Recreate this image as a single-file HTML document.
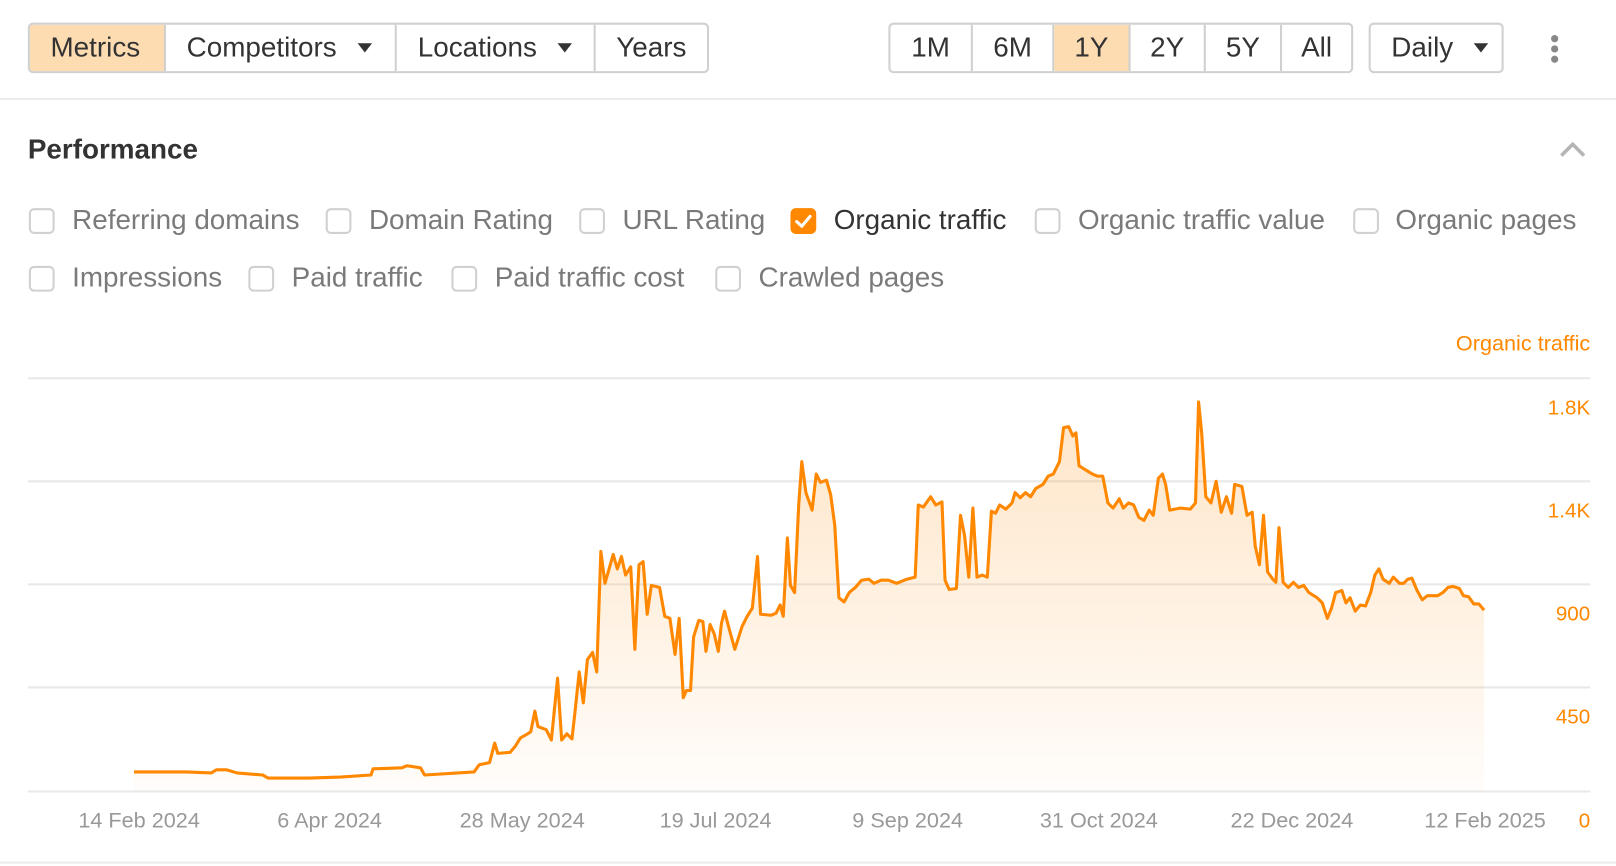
<!DOCTYPE html>
<html><head><meta charset="utf-8"><style>
*{box-sizing:border-box;margin:0;padding:0}
html,body{width:1616px;height:866px;overflow:hidden;background:#fff}
#w{position:absolute;left:0;top:0;width:1568px;height:840px;transform:scale(1.0306);transform-origin:0 0;font-family:"Liberation Sans",Arial,sans-serif;color:#333}
.a{position:absolute;white-space:nowrap}
.grp{position:absolute;top:22px;height:49px;display:flex;border:2px solid #d0d0d0;border-radius:5px;overflow:hidden}
.grp div{display:flex;align-items:center;padding:0 20px;font-size:27px;color:#333;border-right:2px solid #d0d0d0;height:100%;white-space:nowrap}
.grp div:last-child{border-right:none}
.on{background:#fddcb1}
.tri{display:inline-block;width:0;height:0;border-left:7px solid transparent;border-right:7px solid transparent;border-top:9px solid #333;margin-left:20px}
.cb{position:absolute;width:25px;height:25px;border:2px solid #d0d0d0;border-radius:5px}
.lb{position:absolute;font-size:27px;color:#7a7a7a;white-space:nowrap}
.yl{position:absolute;right:25px;font-size:20px;color:#ff8800;text-align:right}
.xl{position:absolute;top:785px;font-size:21px;color:#999;white-space:nowrap}
</style></head><body><div id="w">
<div class="grp" style="left:27px;width:661px">
<div class="on" style="width:133px">Metrics</div>
<div style="width:226px">Competitors<span class="tri"></span></div>
<div style="width:194px">Locations<span class="tri"></span></div>
<div style="flex:1">Years</div>
</div>
<div class="grp" style="left:862px;width:451px">
<div style="width:80px;justify-content:center;padding:0">1M</div>
<div style="width:79px;justify-content:center;padding:0">6M</div>
<div class="on" style="width:74px;justify-content:center;padding:0">1Y</div>
<div style="width:73px;justify-content:center;padding:0">2Y</div>
<div style="width:74px;justify-content:center;padding:0">5Y</div>
<div style="flex:1;justify-content:center;padding:0">All</div>
</div>
<div class="grp" style="left:1328px;width:131px"><div style="padding:0 0 0 20px">Daily<span class="tri"></span></div></div>
<div class="a" style="left:1505px;top:34px;width:7px;height:7px;border-radius:50%;background:#888"></div>
<div class="a" style="left:1505px;top:44px;width:7px;height:7px;border-radius:50%;background:#888"></div>
<div class="a" style="left:1505px;top:54px;width:7px;height:7px;border-radius:50%;background:#888"></div>
<div class="a" style="left:0;top:95px;width:1568px;height:2px;background:#ebebeb"></div>
<div class="a" style="left:27px;top:130px;font-size:27px;font-weight:bold;color:#333">Performance</div>
<svg class="a" style="left:1513px;top:137px" width="26" height="16"><path d="M2 14 L13 3 L24 14" stroke="#b5b5b5" stroke-width="3.5" fill="none"/></svg>

<div class="cb" style="left:28px;top:202px"></div><div class="lb" style="left:70px;top:198px">Referring domains</div>
<div class="cb" style="left:316px;top:202px"></div><div class="lb" style="left:358px;top:198px">Domain Rating</div>
<div class="cb" style="left:562px;top:202px"></div><div class="lb" style="left:604px;top:198px">URL Rating</div>
<div class="cb" style="left:767px;top:202px;background:#ff8800;border-color:#ff8800"><svg width="21" height="21" style="position:absolute;left:0;top:0"><path d="M4 11 L9 15.5 L17 6" stroke="#fff" stroke-width="3" fill="none" stroke-linecap="round" stroke-linejoin="round"/></svg></div><div class="lb" style="left:809px;top:198px;color:#333">Organic traffic</div>
<div class="cb" style="left:1004px;top:202px"></div><div class="lb" style="left:1046px;top:198px">Organic traffic value</div>
<div class="cb" style="left:1313px;top:202px"></div><div class="lb" style="left:1354px;top:198px">Organic pages</div>
<div class="cb" style="left:28px;top:258px"></div><div class="lb" style="left:70px;top:254px">Impressions</div>
<div class="cb" style="left:241px;top:258px"></div><div class="lb" style="left:283px;top:254px">Paid traffic</div>
<div class="cb" style="left:438px;top:258px"></div><div class="lb" style="left:480px;top:254px">Paid traffic cost</div>
<div class="cb" style="left:694px;top:258px"></div><div class="lb" style="left:736px;top:254px">Crawled pages</div>

<div class="a" style="right:25px;top:322px;font-size:21px;color:#ff8800">Organic traffic</div>
<div class="yl" style="top:385px">1.8K</div>
<div class="yl" style="top:485px">1.4K</div>
<div class="yl" style="top:585px">900</div>
<div class="yl" style="top:685px">450</div>
<div class="yl" style="top:786px">0</div>

<svg class="a" style="left:0;top:0" width="1568" height="840">
<defs><linearGradient id="g" gradientUnits="userSpaceOnUse" x1="0" y1="390" x2="0" y2="767"><stop offset="0" stop-color="#ff8800" stop-opacity="0.22"/><stop offset="1" stop-color="#ff8800" stop-opacity="0.02"/></linearGradient></defs>
<g stroke="#e8e8e8" stroke-width="2"><line x1="27" y1="367" x2="1543" y2="367"/><line x1="27" y1="467" x2="1543" y2="467"/><line x1="27" y1="567" x2="1543" y2="567"/><line x1="27" y1="667" x2="1543" y2="667"/></g>
<path d="M130,749 L180,749 205,750 210,747 220,747 230,750 255,752 260,755 300,755 330,754 360,752 362,746 390,745 395,743 408,745 412,752 460,749 465,742 475,740 480,721 483,731 495,730 500,724 505,716 512,712 515,710 519,690 522,705 530,708 535,718 541,658 545,718 550,712 555,717 558,690 562,652 566,682 570,640 575,633 579,652 583,535 587,566 595,538 599,552 603,540 607,558 612,550 616,630 620,548 624,545 628,596 632,568 640,570 645,598 650,600 655,635 659,600 663,677 666,670 670,670 673,618 678,602 682,603 685,632 689,606 693,615 697,632 700,605 703,593 708,612 713,630 720,608 725,598 730,590 735,540 738,596 748,597 753,595 757,587 760,598 764,522 767,568 771,575 775,490 778,448 782,478 788,495 792,460 796,468 802,466 806,480 810,510 814,580 819,584 824,575 830,570 836,563 843,562 848,566 855,563 862,563 870,566 880,562 888,560 891,490 896,492 903,482 908,490 914,487 917,563 921,572 928,571 932,500 936,520 940,560 944,493 948,560 953,558 958,560 962,496 966,498 970,490 976,494 982,488 985,478 990,483 995,478 1000,482 1005,474 1012,470 1017,462 1022,460 1028,448 1032,415 1037,414 1041,423 1044,420 1047,452 1055,457 1060,460 1065,462 1070,462 1075,488 1080,493 1086,484 1090,493 1095,488 1100,490 1105,502 1110,505 1115,495 1119,500 1124,464 1128,460 1131,470 1135,495 1145,493 1155,494 1160,488 1163,390 1166,420 1170,482 1175,488 1180,467 1185,497 1190,482 1195,498 1198,470 1205,472 1210,500 1215,497 1218,530 1222,548 1226,500 1230,555 1235,562 1238,565 1241,512 1245,565 1250,570 1255,565 1260,570 1265,568 1270,575 1278,580 1283,585 1288,600 1292,590 1296,575 1302,573 1306,585 1310,580 1315,593 1320,587 1325,588 1330,575 1334,558 1338,552 1342,562 1348,566 1352,560 1358,566 1362,566 1366,562 1370,561 1375,573 1380,582 1385,578 1395,578 1400,575 1405,570 1410,569 1416,571 1420,578 1425,579 1430,586 1435,586 1440,592 L1440,767 L130,767 Z" fill="url(#g)" stroke="none"/>
<path d="M130,749 L180,749 205,750 210,747 220,747 230,750 255,752 260,755 300,755 330,754 360,752 362,746 390,745 395,743 408,745 412,752 460,749 465,742 475,740 480,721 483,731 495,730 500,724 505,716 512,712 515,710 519,690 522,705 530,708 535,718 541,658 545,718 550,712 555,717 558,690 562,652 566,682 570,640 575,633 579,652 583,535 587,566 595,538 599,552 603,540 607,558 612,550 616,630 620,548 624,545 628,596 632,568 640,570 645,598 650,600 655,635 659,600 663,677 666,670 670,670 673,618 678,602 682,603 685,632 689,606 693,615 697,632 700,605 703,593 708,612 713,630 720,608 725,598 730,590 735,540 738,596 748,597 753,595 757,587 760,598 764,522 767,568 771,575 775,490 778,448 782,478 788,495 792,460 796,468 802,466 806,480 810,510 814,580 819,584 824,575 830,570 836,563 843,562 848,566 855,563 862,563 870,566 880,562 888,560 891,490 896,492 903,482 908,490 914,487 917,563 921,572 928,571 932,500 936,520 940,560 944,493 948,560 953,558 958,560 962,496 966,498 970,490 976,494 982,488 985,478 990,483 995,478 1000,482 1005,474 1012,470 1017,462 1022,460 1028,448 1032,415 1037,414 1041,423 1044,420 1047,452 1055,457 1060,460 1065,462 1070,462 1075,488 1080,493 1086,484 1090,493 1095,488 1100,490 1105,502 1110,505 1115,495 1119,500 1124,464 1128,460 1131,470 1135,495 1145,493 1155,494 1160,488 1163,390 1166,420 1170,482 1175,488 1180,467 1185,497 1190,482 1195,498 1198,470 1205,472 1210,500 1215,497 1218,530 1222,548 1226,500 1230,555 1235,562 1238,565 1241,512 1245,565 1250,570 1255,565 1260,570 1265,568 1270,575 1278,580 1283,585 1288,600 1292,590 1296,575 1302,573 1306,585 1310,580 1315,593 1320,587 1325,588 1330,575 1334,558 1338,552 1342,562 1348,566 1352,560 1358,566 1362,566 1366,562 1370,561 1375,573 1380,582 1385,578 1395,578 1400,575 1405,570 1410,569 1416,571 1420,578 1425,579 1430,586 1435,586 1440,592" fill="none" stroke="#ff8800" stroke-width="3" stroke-linejoin="round"/>
<line x1="27" y1="768" x2="1543" y2="768" stroke="#e8e8e8" stroke-width="2"/>
<line x1="0" y1="837" x2="1568" y2="837" stroke="#ebebeb" stroke-width="2"/>
</svg>
<div class="xl" style="left:76px">14 Feb 2024</div>
<div class="xl" style="left:269px">6 Apr 2024</div>
<div class="xl" style="left:446px">28 May 2024</div>
<div class="xl" style="left:640px">19 Jul 2024</div>
<div class="xl" style="left:827px">9 Sep 2024</div>
<div class="xl" style="left:1009px">31 Oct 2024</div>
<div class="xl" style="left:1194px">22 Dec 2024</div>
<div class="xl" style="left:1382px">12 Feb 2025</div>
</div></body></html>
